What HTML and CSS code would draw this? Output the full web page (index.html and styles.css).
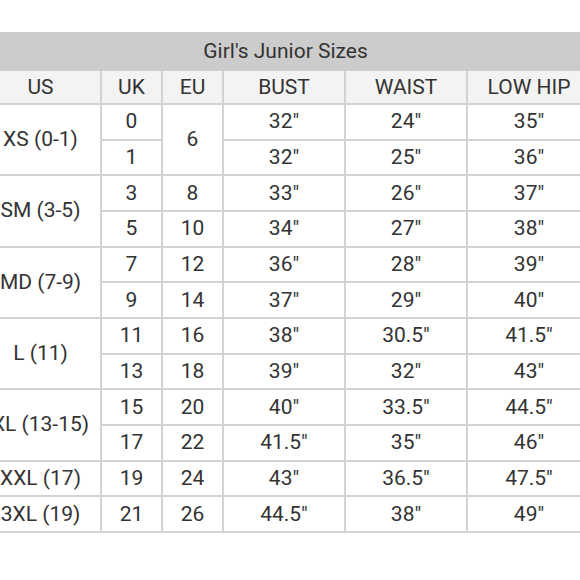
FILE: index.html
```html
<!DOCTYPE html>
<html>
<head>
<meta charset="utf-8">
<link rel="stylesheet" href="styles.css">
</head>
<body>
<table class="sizes">
  <colgroup>
    <col class="c-us"><col class="c-uk"><col class="c-eu"><col class="c-m"><col class="c-m"><col class="c-last">
  </colgroup>
  <tr class="title-row"><td colspan="6">Girl's Junior Sizes</td></tr>
  <tr class="head-row"><td>US</td><td>UK</td><td>EU</td><td>BUST</td><td>WAIST</td><td>LOW HIP</td></tr>
  <tr><td rowspan="2">XS (0-1)</td><td>0</td><td rowspan="2">6</td><td>32"</td><td>24"</td><td>35"</td></tr>
  <tr><td>1</td><td>32"</td><td>25"</td><td>36"</td></tr>
  <tr><td rowspan="2">SM (3-5)</td><td>3</td><td>8</td><td>33"</td><td>26"</td><td>37"</td></tr>
  <tr><td>5</td><td>10</td><td>34"</td><td>27"</td><td>38"</td></tr>
  <tr><td rowspan="2">MD (7-9)</td><td>7</td><td>12</td><td>36"</td><td>28"</td><td>39"</td></tr>
  <tr><td>9</td><td>14</td><td>37"</td><td>29"</td><td>40"</td></tr>
  <tr><td rowspan="2">L (11)</td><td>11</td><td>16</td><td>38"</td><td>30.5"</td><td>41.5"</td></tr>
  <tr><td>13</td><td>18</td><td>39"</td><td>32"</td><td>43"</td></tr>
  <tr><td rowspan="2">XL (13-15)</td><td>15</td><td>20</td><td>40"</td><td>33.5"</td><td>44.5"</td></tr>
  <tr><td>17</td><td>22</td><td>41.5"</td><td>35"</td><td>46"</td></tr>
  <tr><td>XXL (17)</td><td>19</td><td>24</td><td>43"</td><td>36.5"</td><td>47.5"</td></tr>
  <tr><td>3XL (19)</td><td>21</td><td>26</td><td>44.5"</td><td>38"</td><td>49"</td></tr>
</table>
</body>
</html>
```

FILE: styles.css
```css
html, body {
  margin: 0;
  padding: 0;
  background: #ffffff;
  overflow: hidden;
}

body {
  font-family: Roboto, "Liberation Sans", sans-serif;
  color: #333333;
}

.sizes {
  margin-top: 32px;
  margin-left: -21px;
  width: 611px;
  table-layout: fixed;
  border-collapse: collapse;
  font-size: 21px;
}

.c-us { width: 121px; }
.c-uk { width: 61px; }
.c-eu { width: 61px; }
.c-m { width: 122px; }
.c-last { width: 124px; }

.sizes td {
  border: 2px solid #d2d2d2;
  text-align: center;
  vertical-align: middle;
  padding: 0;
  height: 33.67px;
  line-height: 1;
}

.title-row td {
  background: #cccccc;
  border-color: #cccccc;
  height: 35px;
}

.head-row td {
  background: #f3f3f3;
  height: 32px;
}
```
